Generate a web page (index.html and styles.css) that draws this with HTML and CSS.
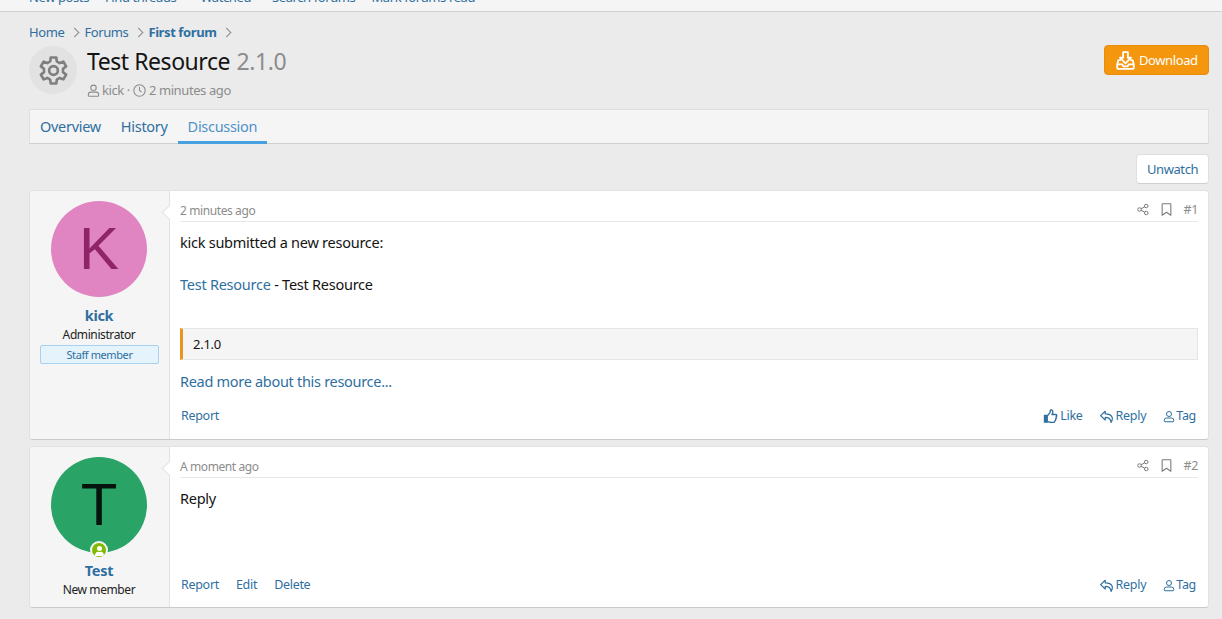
FILE: index.html
```html
<!DOCTYPE html>
<html lang="en">
<head>
<meta charset="utf-8">
<title>Test Resource</title>
<link rel="stylesheet" href="styles.css">
</head>
<body>
<svg class="defs" width="0" height="0">
  <defs>
    <symbol id="i-user" viewBox="0 0 24 24"><circle cx="12" cy="7" r="5" fill="none" stroke="currentColor" stroke-width="2"/><path d="M4 22.500h16a1.500 1.500 0 0 0 1.500-1.500v-1.500a4.500 4.500 0 0 0-4.500-4.500H7a4.500 4.500 0 0 0-4.500 4.500V21A1.500 1.500 0 0 0 4 22.500z" fill="none" stroke="currentColor" stroke-width="2"/></symbol>
    <symbol id="i-clock" viewBox="0 0 24 24"><circle cx="12" cy="12" r="10.500" fill="none" stroke="currentColor" stroke-width="2"/><path d="M12 5.500V12l4 3" fill="none" stroke="currentColor" stroke-width="2"/></symbol>
    <symbol id="i-share" viewBox="0 0 24 24"><circle cx="18.500" cy="5" r="3.500" fill="none" stroke="currentColor" stroke-width="2"/><circle cx="5" cy="12" r="3.500" fill="none" stroke="currentColor" stroke-width="2"/><circle cx="18.500" cy="19" r="3.500" fill="none" stroke="currentColor" stroke-width="2"/><path d="M8 10.300l7.500-3.700M8 13.700l7.500 3.700" fill="none" stroke="currentColor" stroke-width="2"/></symbol>
    <symbol id="i-mark" viewBox="0 0 24 24"><path d="M5 1.500h14a1 1 0 0 1 1 1v20l-8-5.500-8 5.500v-20a1 1 0 0 1 1-1z" fill="none" stroke="currentColor" stroke-width="2" stroke-linejoin="round"/></symbol>
    <symbol id="i-reply" viewBox="0 0 24 24"><path d="M9 3L1 10.500 9 18v-4.500c5 0 9 1 10 8.500 4-6 3-14.500-10-14.500z" fill="none" stroke="currentColor" stroke-width="2" stroke-linejoin="round"/></symbol>
    <symbol id="i-like" viewBox="0 0 24 24"><path d="M1.500 11h5v11.500h-5z" fill="currentColor" stroke="currentColor" stroke-width="2" stroke-linejoin="round"/><path d="M6.500 12l4-5c1-1.300 1-2.500 1.200-4.500.2-1.500 4.300-1.500 4.300 2.500 0 2-1 3.500-1.500 4.500h6c2.500 0 3 3 1 4 1 1.500.5 3-.8 3.500.5 1.500 0 3-1.200 3.500 0 1.500-1 2.500-2.500 2.500h-4c-3 0-4.500-1.500-6.500-1.500" fill="none" stroke="currentColor" stroke-width="2.300" stroke-linejoin="round"/></symbol>
  </defs>
</svg>

<nav class="topbar">
  <a>New posts</a><a>Find threads</a><a class="drop">Watched</a><a>Search forums</a><a>Mark forums read</a>
</nav>

<main class="page">
  <ul class="crumbs">
    <li><a>Home</a></li>
    <li><a>Forums</a></li>
    <li><a class="strong">First forum</a></li>
  </ul>

  <header class="res-head">
    <div class="res-icon">
      <svg viewBox="0 0 24 24" width="29" height="29"><path d="M9.260 4.480L9.710 1.240H14.290L14.740 4.480L17.140 5.870L20.170 4.640L22.460 8.600L19.880 10.610V13.390L22.460 15.400L20.170 19.360L17.140 18.130L14.740 19.520L14.290 22.760H9.710L9.260 19.520L6.860 18.130L3.830 19.360L1.540 15.400L4.120 13.390V10.610L1.540 8.600L3.830 4.640L6.860 5.870Z" fill="none" stroke="currentColor" stroke-width="2.200" stroke-linejoin="round"/><circle cx="12" cy="12" r="3.600" fill="none" stroke="currentColor" stroke-width="2.200"/></svg>
    </div>
    <div class="res-title">
      <h1>Test Resource <span>2.1.0</span></h1>
      <p class="res-meta"><svg class="ic13 tight"><use href="#i-user"/></svg> kick · <svg class="ic13"><use href="#i-clock"/></svg> 2 minutes ago</p>
    </div>
    <a class="btn-dl">
      <svg viewBox="0 0 24 24" width="19" height="19"><path d="M9 1.500h6v7h4l-7 7-7-7h4zM6 11.500H3L1.500 17v4.500a1 1 0 0 0 1 1h19a1 1 0 0 0 1-1V17L21 11.500h-3M1.500 17H8l1.500 2.500h5L16 17h6.500" fill="none" stroke="currentColor" stroke-width="2.300" stroke-linejoin="round"/></svg>
      Download
    </a>
  </header>

  <div class="tabs">
    <a>Overview</a><a>History</a><a class="active">Discussion</a>
  </div>

  <div class="btn-row"><a class="btn">Unwatch</a></div>

  <article class="post post-one">
    <aside class="user">
      <div class="avatar pink">K</div>
      <a class="uname">kick</a>
      <div class="utitle">Administrator</div>
      <div class="staff">Staff member</div>
    </aside>
    <section class="cell">
      <header class="attr">
        <span class="date">2 minutes ago</span>
        <span class="attr-r"><svg class="ic13"><use href="#i-share"/></svg><svg class="ic13"><use href="#i-mark"/></svg><span class="num">#1</span></span>
      </header>
      <div class="body">
        <p>kick submitted a new resource:</p>
        <p class="gap"><a>Test Resource</a> - Test Resource</p>
        <div class="quote">2.1.0</div>
        <p class="more"><a>Read more about this resource...</a></p>
      </div>
      <footer class="actions">
        <span class="act-l"><a>Report</a></span>
        <span class="act-r">
          <a class="act"><svg class="ic14"><use href="#i-like"/></svg>Like</a>
          <a class="act"><svg class="ic-reply"><use href="#i-reply"/></svg>Reply</a>
          <a class="act act-tag"><svg class="ic-tag"><use href="#i-user"/></svg>Tag</a>
        </span>
      </footer>
    </section>
  </article>

  <article class="post post-two">
    <aside class="user">
      <div class="avatar green">T
        <span class="online"><svg viewBox="0 0 24 24" width="11" height="11"><circle cx="12" cy="7.500" r="5.500" fill="#fff"/><path fill="#fff" d="M2 24c0-6 3-9.500 6.500-9.500 2.300 1 4.700 1 7 0 3.500 0 6.500 3.500 6.500 9.500z"/></svg></span>
      </div>
      <a class="uname">Test</a>
      <div class="utitle">New member</div>
    </aside>
    <section class="cell">
      <header class="attr">
        <span class="date">A moment ago</span>
        <span class="attr-r"><svg class="ic13"><use href="#i-share"/></svg><svg class="ic13"><use href="#i-mark"/></svg><span class="num">#2</span></span>
      </header>
      <div class="body">
        <p>Reply</p>
      </div>
      <footer class="actions">
        <span class="act-l"><a>Report</a><a>Edit</a><a>Delete</a></span>
        <span class="act-r">
          <a class="act"><svg class="ic-reply"><use href="#i-reply"/></svg>Reply</a>
          <a class="act act-tag"><svg class="ic-tag"><use href="#i-user"/></svg>Tag</a>
        </span>
      </footer>
    </section>
  </article>
</main>
</body>
</html>
```
FILE: styles.css
```css
* { box-sizing: border-box; }
html, body { margin: 0; padding: 0; height: 619px; overflow: hidden; }
body {
  background: #ebebeb;
  color: #141414;
  font-family: "Noto Sans", "Open Sans", sans-serif;
  font-size: 13px;
  letter-spacing: -0.4px;
}
a { color: #2f6f9f; text-decoration: none; }
p, h1, ul { margin: 0; padding: 0; }
.defs { display: block; height: 0; }
svg { display: inline-block; vertical-align: -2px; }
.ic13 { width: 13px; height: 13px; }
.ic14 { width: 15px; height: 14px; }
.ic-reply { width: 14px; height: 15px; }
.ic-tag { width: 12px; height: 13px; }
.tight { margin-right: -1px; }

.topbar {
  height: 12px;
  background: #f5f5f5;
  border-bottom: 1px solid #d0d0d0;
  padding-left: 29px;
  display: flex;
  gap: 16px;
  align-items: flex-end;
  overflow: hidden;
  line-height: 18px;
}
.topbar a { flex: none; margin-bottom: 5px; }
.topbar a.drop { margin-left: 8px; margin-right: 5px; }

.page { padding: 0 13px 0 29px; }

.crumbs {
  list-style: none;
  display: flex;
  padding-top: 6px;
  height: 34px;
  line-height: 18px;
}
.crumbs li { display: flex; align-items: center; }
.crumbs li::after {
  content: "";
  width: 6px;
  height: 6px;
  border-top: 1px solid #8c8c8c;
  border-right: 1px solid #8c8c8c;
  transform: rotate(45deg);
  margin: 0 6px 0 7px;
}
.crumbs .strong { font-weight: 700; }

.res-head { display: flex; height: 63px; align-items: flex-start; }
.res-icon {
  width: 48px;
  height: 48px;
  flex: none;
  border-radius: 50%;
  background: #e2e2e2;
  color: #7f7f7f;
  display: flex;
  align-items: center;
  justify-content: center;
}
.res-icon svg { vertical-align: 0; }
.res-title { flex: 1; padding-left: 10px; }
h1 { font-size: 23px; font-weight: 400; line-height: 30px; letter-spacing: -0.45px; }
h1 span { color: #8c8c8c; margin-left: 1px; }
.res-meta { color: #8c8c8c; margin-top: 5px; line-height: 18px; }
.btn-dl {
  width: 105px;
  height: 30px;
  flex: none;
  margin-top: -1px;
  padding-left: 11px;
  background: #f5960f;
  border: 1px solid #e88c0b;
  border-radius: 4px;
  color: #fff;
  display: flex;
  align-items: center;
  gap: 4px;
}

.tabs {
  height: 35px;
  background: #f5f5f5;
  border: 1px solid #dfdfdf;
  border-bottom-color: #cfcfcf;
  display: flex;
  font-size: 14.500px;
  letter-spacing: -0.3px;
}
.tabs a {
  padding: 0 10px;
  line-height: 33px;
  margin-bottom: -1px;
}
.tabs a.active { color: #4f93c9; border-bottom: 3px solid #47a1e0; }

.btn-row { display: flex; justify-content: flex-end; padding-top: 10px; height: 46px; }
.btn {
  width: 73px;
  height: 30px;
  background: #fff;
  border: 1px solid #dfdfdf;
  border-bottom-color: #cfcfcf;
  border-radius: 4px;
  display: flex;
  align-items: center;
  justify-content: center;
}

.post {
  display: flex;
  background: #fff;
  border: 1px solid #e2e2e2;
  border-bottom-color: #c9c9c9;
  border-radius: 4px;
  overflow: hidden;
}
.post-one { height: 250px; margin-bottom: 6px; }
.post-two { height: 162px; }

.user {
  width: 140px;
  flex: none;
  background: #f5f5f5;
  border-right: 1px solid #e2e2e2;
  padding: 10px 10px 0;
  text-align: center;
  position: relative;
}
.user::after {
  content: "";
  position: absolute;
  right: -6px;
  top: 16px;
  width: 10px;
  height: 10px;
  background: #fff;
  border-left: 1px solid #e2e2e2;
  border-bottom: 1px solid #e2e2e2;
  transform: rotate(45deg);
}
.avatar {
  width: 96px;
  height: 96px;
  margin: 0 0 8px 11px;
  border-radius: 50%;
  font-family: "Liberation Sans", sans-serif;
  font-size: 60px;
  line-height: 96px;
  letter-spacing: 0;
  position: relative;
}
.post-two .avatar { margin-bottom: 7px; }
.pink { background: #e085c2; color: #8f2468; }
.green { background: #29a366; color: #06140d; }
.online {
  position: absolute;
  left: 39px;
  bottom: -6px;
  width: 18px;
  height: 18px;
  border-radius: 50%;
  background: #7fb900;
  border: 2px solid #f5f5f5;
  display: flex;
  align-items: center;
  justify-content: center;
  overflow: hidden;
}
.online svg { vertical-align: 0; }
.uname { display: block; font-size: 14.500px; font-weight: 700; line-height: 20px; letter-spacing: -0.3px; margin-right: 1px; }
.utitle { font-size: 12px; line-height: 18px; color: #222; margin-top: 1px; margin-right: 1px; }
.staff {
  height: 19px;
  margin-top: 1px;
  background: #e5f3fc;
  border: 1px solid #a9d1ee;
  border-radius: 2px;
  font-size: 11px;
  line-height: 17px;
  color: #2f6f9f;
}

.cell {
  flex: 1;
  padding: 0 10px;
  display: flex;
  flex-direction: column;
  min-width: 0;
}
.attr {
  height: 31px;
  padding-top: 10px;
  border-bottom: 1px solid #e8e8e8;
  display: flex;
  justify-content: space-between;
  align-items: center;
  font-size: 12px;
  color: #8c8c8c;
}
.attr-r { display: flex; align-items: center; gap: 11px; margin-top: -4px; color: #7a7a7a; }
.attr-r svg:first-child { width: 12px; height: 13px; }
.attr-r .num { font-size: 12.500px; color: #8c8c8c; }
.date { line-height: 18px; }
.body { flex: 1; font-size: 14.500px; line-height: 21px; padding-top: 10px; letter-spacing: -0.25px; }
.gap { margin-top: 21px; }
.quote {
  height: 32px;
  margin-top: 33px;
  background: #f5f5f5;
  border: 1px solid #e6e6e6;
  border-left: 3px solid #e8951c;
  padding-left: 10px;
  font-size: 13px;
  line-height: 30px;
}
.more { margin-top: 11px; letter-spacing: -0.3px; }
.actions {
  height: 36px;
  display: flex;
  justify-content: space-between;
  align-items: flex-start;
  line-height: 18px;
  padding: 5px 2px 0 1px;
  font-size: 12.500px;
  letter-spacing: -0.3px;
}
.post-one .actions { height: 37px; }
.act-l, .act-r { display: flex; gap: 17px; }
.act { display: flex; align-items: center; gap: 2px; }
.act-tag { gap: 1px; }
```
